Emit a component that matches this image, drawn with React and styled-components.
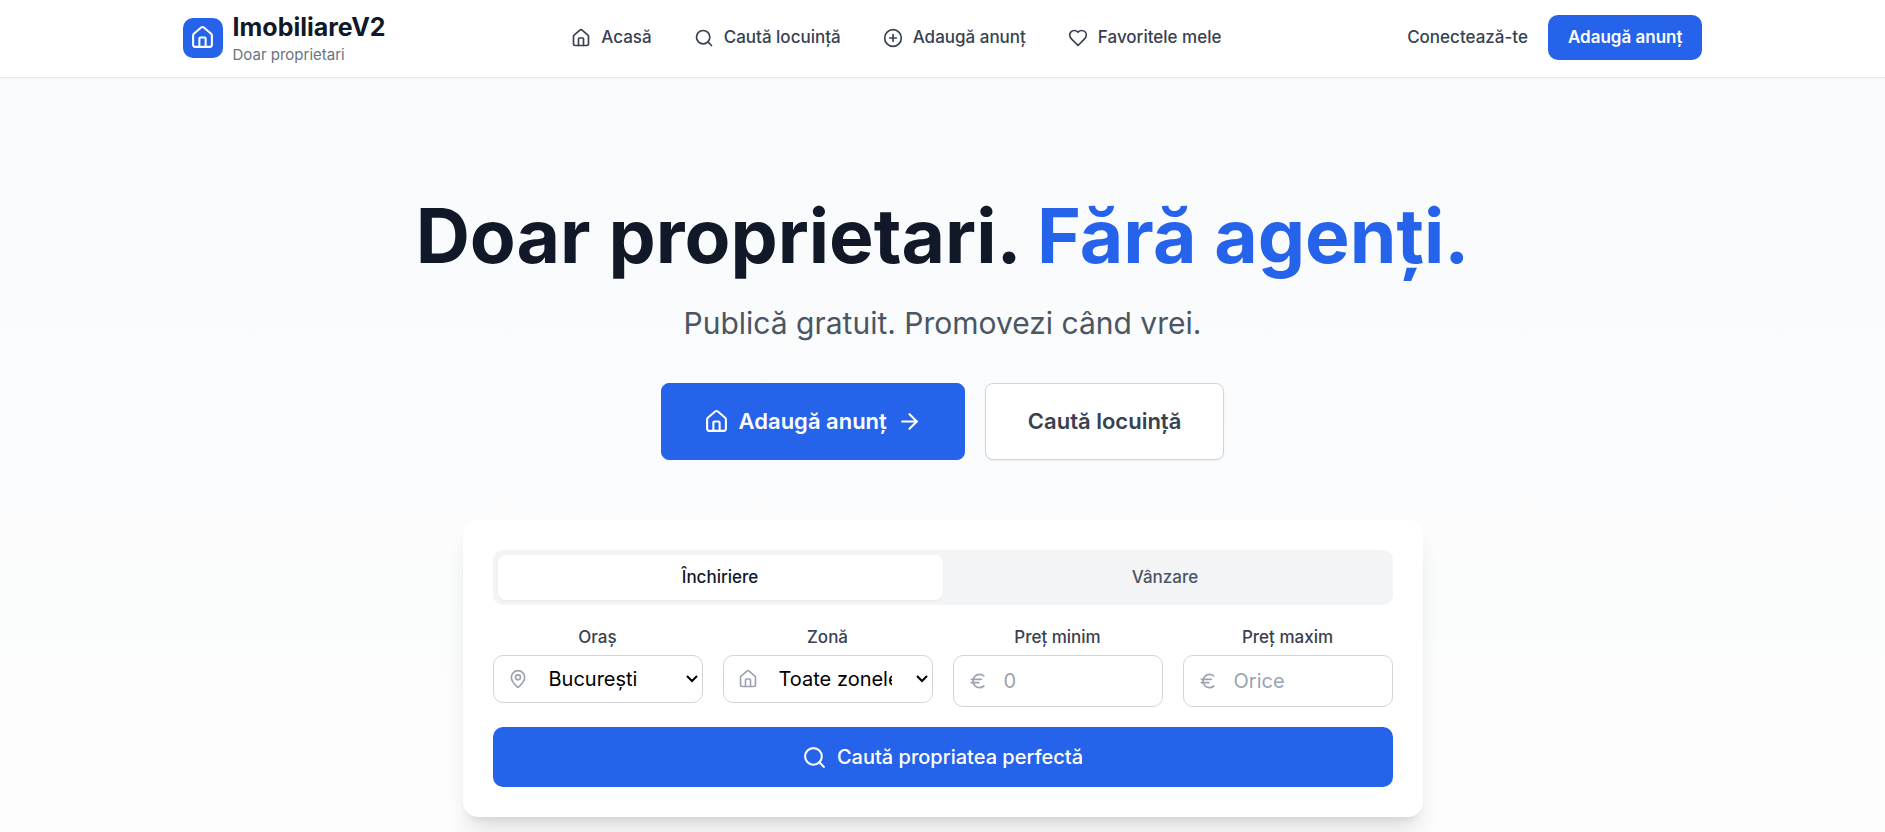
import React, { useState } from 'react';
import styled, { createGlobalStyle, css } from 'styled-components';
import { House, Search, CirclePlus, ArrowRight, MapPin, Euro } from 'lucide-react';

const GlobalStyle = createGlobalStyle`
  *, *::before, *::after { box-sizing: border-box; }
  body {
    margin: 0;
    font-family: Inter, "Liberation Sans", sans-serif;
    font-size: 20px;
    line-height: 30px;
    color: #111827;
    background: #fff;
  }
  button, input, select { font: inherit; }
  a { color: inherit; text-decoration: none; }
`;

const Page = styled.div`
  min-height: 100vh;
  display: flex;
  flex-direction: column;
`;

const Header = styled.header`
  background: #fff;
  border-bottom: 1px solid #e5e7eb;
  box-shadow: 0 1px 2px rgba(0, 0, 0, 0.05);
`;

const HeaderInner = styled.div`
  max-width: 1600px;
  height: 77px;
  margin: 0 auto;
  padding: 0 40px 2px;
  display: flex;
  align-items: center;
  justify-content: space-between;
`;

const Brand = styled.a`
  display: flex;
  align-items: center;
  gap: 10px;
`;

const BrandMark = styled.span`
  display: flex;
  align-items: center;
  justify-content: center;
  width: 40px;
  height: 40px;
  border-radius: 10px;
  background: #2563eb;
  color: #fff;
`;

const BrandText = styled.span`
  display: flex;
  flex-direction: column;
`;

const BrandName = styled.span`
  font-size: 25px;
  line-height: 35px;
  font-weight: 700;
`;

const BrandTagline = styled.span`
  font-size: 15px;
  line-height: 20px;
  color: #6b7280;
`;

const Nav = styled.nav`
  display: flex;
  gap: 42px;
`;

const NavLink = styled.a`
  display: flex;
  align-items: center;
  gap: 10px;
  font-size: 17px;
  line-height: 25px;
  font-weight: 500;
  color: #374151;
`;

const Actions = styled.div`
  display: flex;
  align-items: center;
  gap: 20px;
`;

const HeaderButton = styled.button`
  height: 45px;
  padding: 0 20px;
  border: 0;
  border-radius: 10px;
  background: #2563eb;
  color: #fff;
  font-size: 17px;
  line-height: 25px;
  font-weight: 600;
`;

const Hero = styled.main`
  flex: 1;
  padding: 120px 40px 15px;
  display: flex;
  flex-direction: column;
  align-items: center;
  text-align: center;
  background: linear-gradient(to bottom, #f8fafc, #fdfdfd);
`;

const Title = styled.h1`
  margin: 0 0 25px;
  font-size: 75px;
  line-height: 75px;
  font-weight: 700;
`;

const Accent = styled.span`
  color: #2563eb;
`;

const Subtitle = styled.p`
  margin: 0 0 35px;
  font-size: 30px;
  line-height: 50px;
  color: #4b5563;
`;

const HeroActions = styled.div`
  display: flex;
  gap: 20px;
  margin-bottom: 60px;
`;

const HeroButton = styled.button`
  height: 77px;
  padding: 0 42px;
  display: flex;
  align-items: center;
  gap: 10px;
  border-radius: 8px;
  font-size: 22px;
  line-height: 35px;
  font-weight: 600;
  ${({ $primary }) => $primary
    ? css`
        border: 1px solid #2563eb;
        background: #2563eb;
        color: #fff;
      `
    : css`
        border: 1px solid #d1d5db;
        background: #fff;
        color: #374151;
        box-shadow: 0 1px 2px rgba(0, 0, 0, 0.05);
      `}
`;

const SearchCard = styled.form`
  width: 100%;
  max-width: 960px;
  padding: 30px;
  border-radius: 15px;
  background: #fff;
  box-shadow: 0 20px 25px -5px rgba(0, 0, 0, 0.1), 0 8px 10px -6px rgba(0, 0, 0, 0.1);
`;

const Tabs = styled.div`
  display: flex;
  padding: 5px;
  margin-bottom: 20px;
  border-radius: 10px;
  background: #f3f4f6;
`;

const Tab = styled.button`
  flex: 1;
  height: 45px;
  border: 0;
  border-radius: 8px;
  background: ${({ $active }) => ($active ? '#fff' : 'transparent')};
  box-shadow: ${({ $active }) => ($active ? '0 1px 2px rgba(0, 0, 0, 0.05)' : 'none')};
  color: ${({ $active }) => ($active ? '#111827' : '#4b5563')};
  font-size: 17px;
  line-height: 25px;
  font-weight: 500;
`;

const Fields = styled.div`
  display: grid;
  grid-template-columns: repeat(4, 1fr);
  align-items: start;
  gap: 20px;
  margin-bottom: 20px;
`;

const Field = styled.div`
  display: flex;
  flex-direction: column;
  gap: 5px;
`;

const Label = styled.label`
  font-size: 17px;
  line-height: 25px;
  font-weight: 500;
  color: #374151;
`;

const Control = styled.div`
  position: relative;
  display: flex;
`;

const Adornment = styled.span`
  position: absolute;
  top: 0;
  bottom: 0;
  left: 15px;
  display: flex;
  align-items: center;
  color: #9ca3af;
  pointer-events: none;
`;

const SelectArrow = styled(Adornment)`
  left: auto;
  right: 5px;
  color: #000;
`;

const controlStyles = css`
  width: 100%;
  min-width: 0;
  border: 1px solid #d1d5db;
  border-radius: 10px;
  background: #fff;
  font-size: 20px;
`;

const Select = styled.select`
  ${controlStyles}
  appearance: none;
  height: 48px;
  padding: 0 40px 0 55px;
  color: #000;
`;

const Input = styled.input`
  ${controlStyles}
  height: 52px;
  padding: 0 15px 0 50px;
  color: #111827;
  &::placeholder { color: #9ca3af; }
`;

const SubmitButton = styled.button`
  width: 100%;
  height: 60px;
  display: flex;
  align-items: center;
  justify-content: center;
  gap: 10px;
  border: 0;
  border-radius: 10px;
  background: #2563eb;
  color: #fff;
  font-size: 20px;
  line-height: 30px;
  font-weight: 500;
`;

function HeartIcon({ size }) {
  return (
    <svg width={size} height={size} viewBox="0 0 24 24" fill="none" stroke="currentColor" strokeWidth="2" strokeLinecap="round" strokeLinejoin="round" aria-hidden="true">
      <path d="M19 14c1.49-1.46 3-3.21 3-5.5A5.5 5.5 0 0 0 16.5 3c-1.76 0-3 .5-4.5 2-1.5-1.5-2.74-2-4.5-2A5.5 5.5 0 0 0 2 8.5c0 2.3 1.5 4.05 3 5.5l7 7Z" />
    </svg>
  );
}

const navItems = [
  { label: 'Acasă', Icon: House },
  { label: 'Caută locuință', Icon: Search },
  { label: 'Adaugă anunț', Icon: CirclePlus },
  { label: 'Favoritele mele', Icon: HeartIcon },
];

function SelectField({ id, label, Icon, options }) {
  return (
    <Field>
      <Label htmlFor={id}>{label}</Label>
      <Control>
        <Select id={id}>
          {options.map((option) => <option key={option}>{option}</option>)}
        </Select>
        <Adornment><Icon size={20} /></Adornment>
        <SelectArrow>
          <svg width="12" height="8" viewBox="0 0 12 8" fill="none" stroke="currentColor" strokeWidth="2" aria-hidden="true">
            <path d="M1 1l5 5 5-5" />
          </svg>
        </SelectArrow>
      </Control>
    </Field>
  );
}

function PriceField({ id, label, placeholder }) {
  return (
    <Field>
      <Label htmlFor={id}>{label}</Label>
      <Control>
        <Input id={id} inputMode="numeric" placeholder={placeholder} />
        <Adornment><Euro size={20} /></Adornment>
      </Control>
    </Field>
  );
}

export default function App() {
  const [mode, setMode] = useState('Închiriere');
  return (
    <Page>
      <GlobalStyle />
      <Header>
        <HeaderInner>
          <Brand href="#">
            <BrandMark><House size={25} /></BrandMark>
            <BrandText>
              <BrandName>ImobiliareV2</BrandName>
              <BrandTagline>Doar proprietari</BrandTagline>
            </BrandText>
          </Brand>
          <Nav>
            {navItems.map(({ label, Icon }) => (
              <NavLink href="#" key={label}>
                <Icon size={20} />
                {label}
              </NavLink>
            ))}
          </Nav>
          <Actions>
            <NavLink href="#">Conectează-te</NavLink>
            <HeaderButton type="button">Adaugă anunț</HeaderButton>
          </Actions>
        </HeaderInner>
      </Header>
      <Hero>
        <Title>Doar proprietari. <Accent>Fără agenți.</Accent></Title>
        <Subtitle>Publică gratuit. Promovezi când vrei.</Subtitle>
        <HeroActions>
          <HeroButton type="button" $primary>
            <House size={25} />
            Adaugă anunț
            <ArrowRight size={25} />
          </HeroButton>
          <HeroButton type="button">Caută locuință</HeroButton>
        </HeroActions>
        <SearchCard onSubmit={(e) => e.preventDefault()}>
          <Tabs>
            {['Închiriere', 'Vânzare'].map((name) => (
              <Tab key={name} type="button" $active={mode === name} onClick={() => setMode(name)}>
                {name}
              </Tab>
            ))}
          </Tabs>
          <Fields>
            <SelectField id="city" label="Oraș" Icon={MapPin} options={['București']} />
            <SelectField id="zone" label="Zonă" Icon={House} options={['Toate zonele']} />
            <PriceField id="price-min" label="Preț minim" placeholder="0" />
            <PriceField id="price-max" label="Preț maxim" placeholder="Orice" />
          </Fields>
          <SubmitButton type="submit">
            <Search size={25} />
            Caută propriatea perfectă
          </SubmitButton>
        </SearchCard>
      </Hero>
    </Page>
  );
}
